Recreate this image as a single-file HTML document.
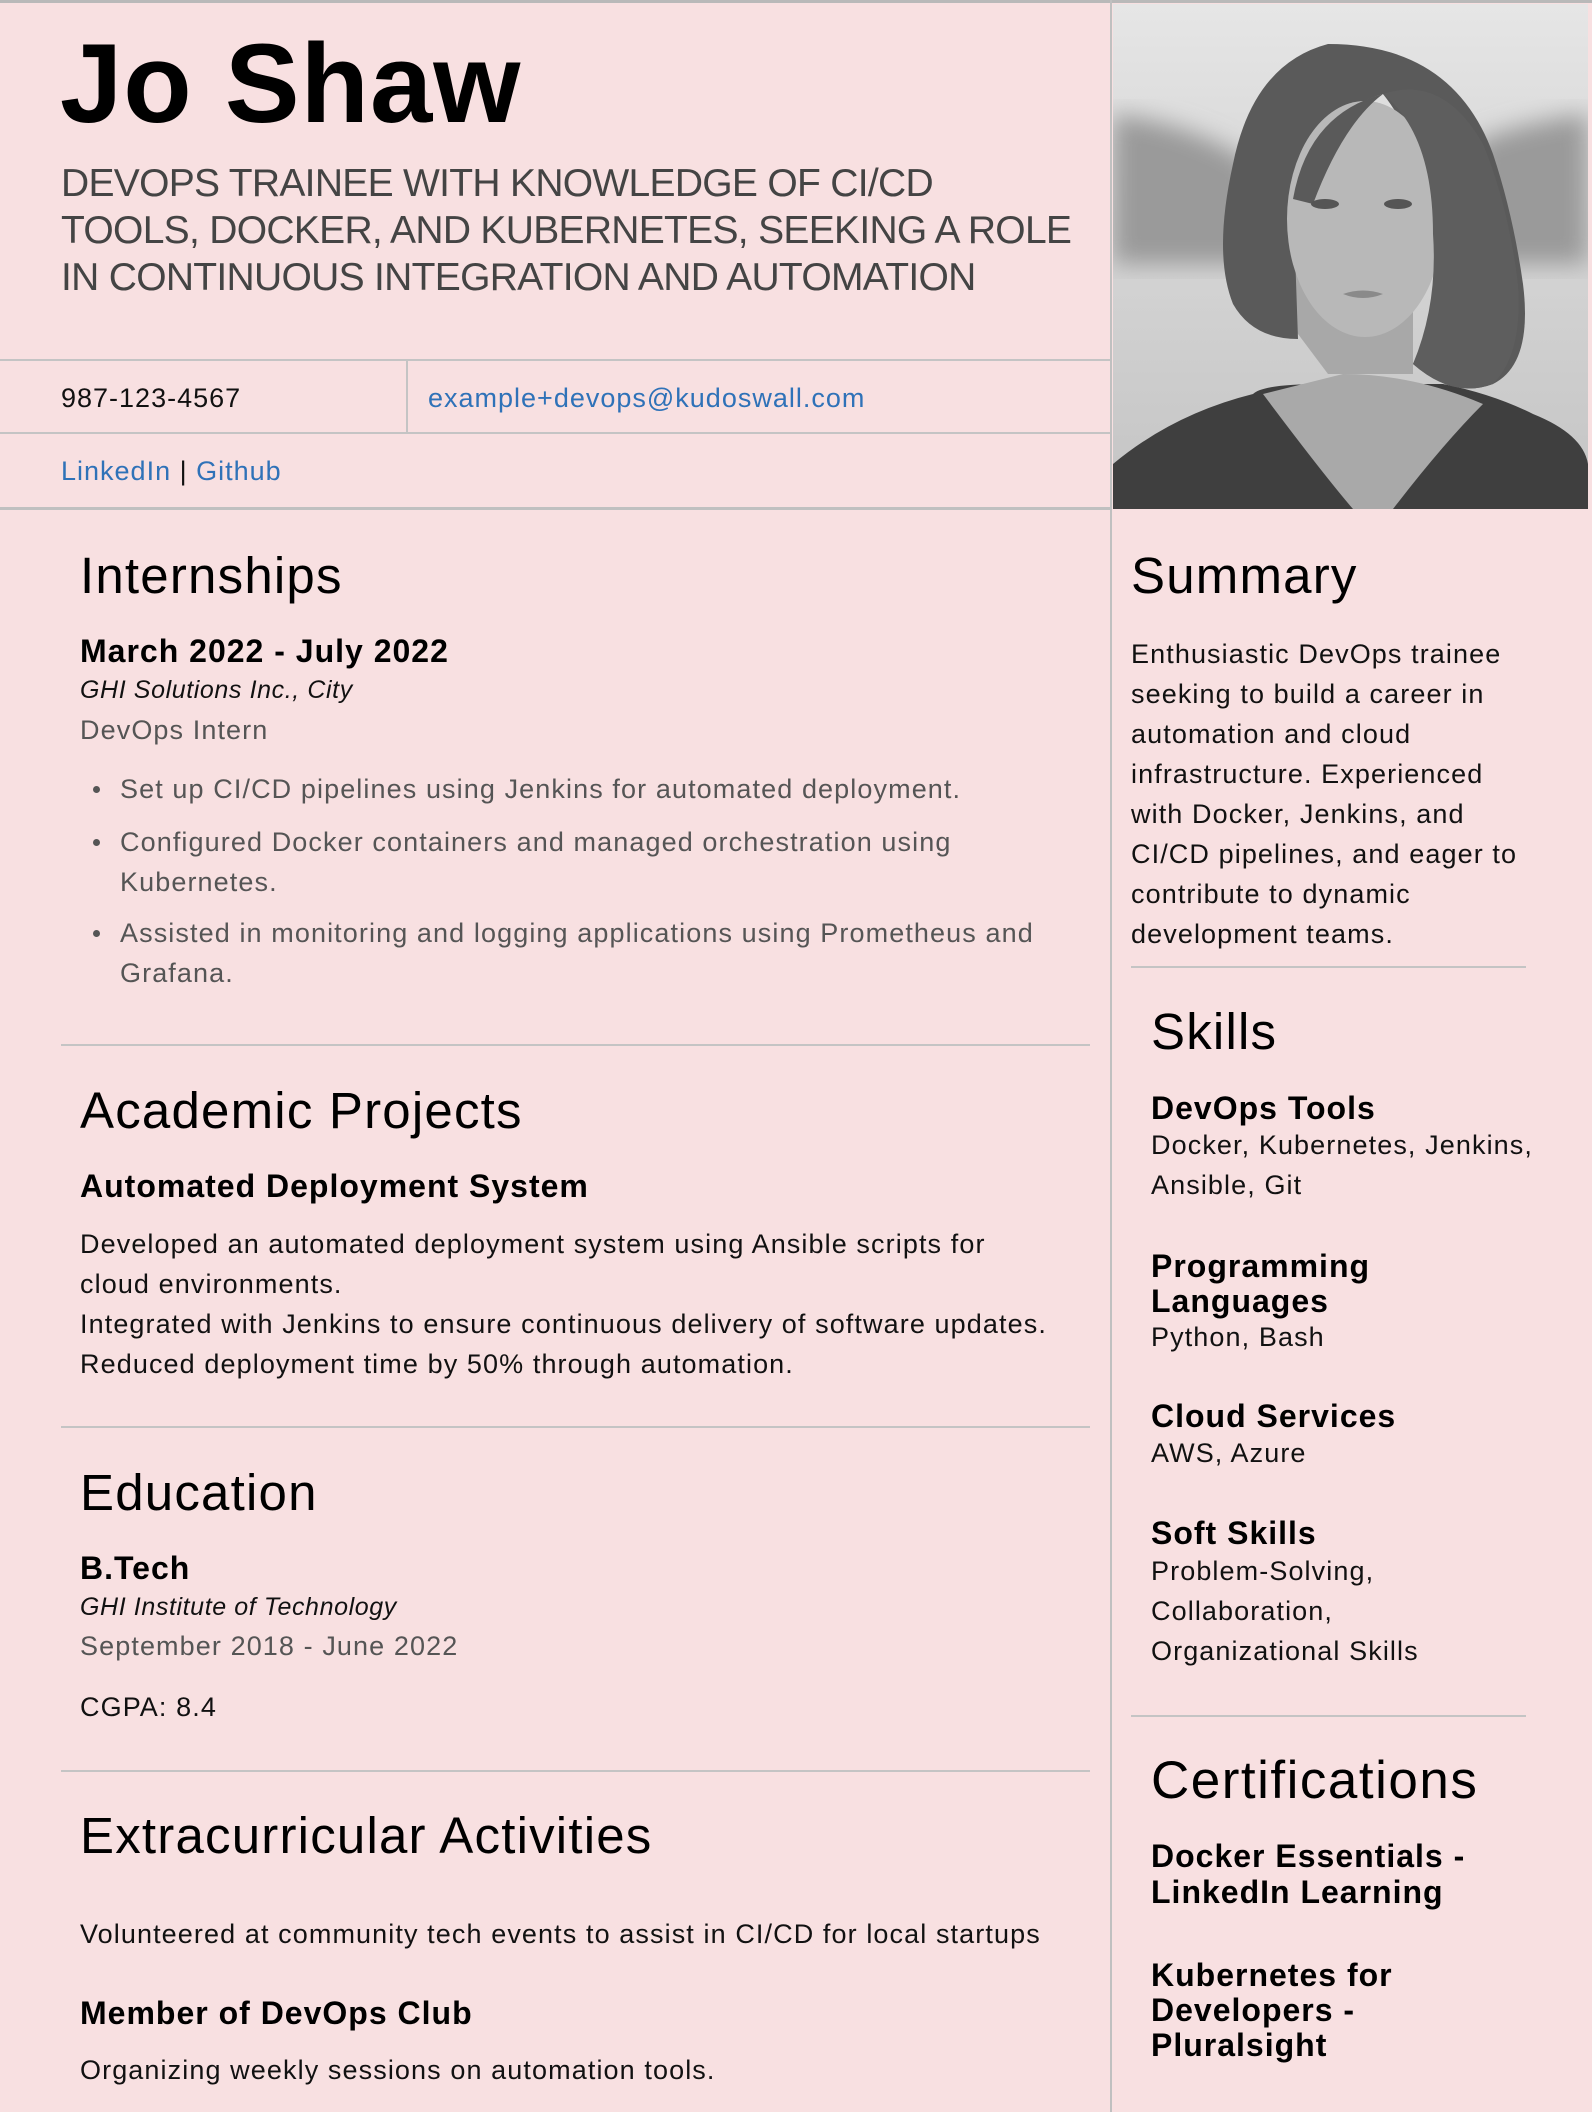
<!DOCTYPE html>
<html><head><meta charset="utf-8"><style>
*{margin:0;padding:0;box-sizing:border-box}
body{width:1592px;height:2112px;background:#f8e0e1;font-family:"Liberation Sans",sans-serif;color:#111;position:relative;overflow:hidden}
.a{position:absolute;white-space:nowrap}
.h{font-size:51px;line-height:60px;color:#000;letter-spacing:1.2px}
.sb{font-size:32px;line-height:40px;font-weight:bold;color:#000;letter-spacing:1px}
.it{font-size:25px;line-height:34px;font-style:italic;color:#111;letter-spacing:0.6px}
.g{font-size:27px;line-height:40px;color:#555;letter-spacing:1.1px}
.t{font-size:27px;line-height:40px;color:#111;letter-spacing:1.1px}
.hr{position:absolute;height:2px;background:#c4c4c4}
a{color:#2f72b8;text-decoration:none}
.li{position:absolute;white-space:nowrap;padding-left:27px}
.li:before{content:"";position:absolute;left:0;top:17px;width:7px;height:7px;border-radius:50%;background:#555}
</style></head><body>
<div style="position:absolute;left:0;top:0;width:1592px;height:3px;background:#b9b9b9"></div>
<div class="a" style="left:60px;top:28px;font-size:112px;line-height:112px;font-weight:bold;color:#000;letter-spacing:1px">Jo Shaw</div>
<div class="a" style="left:61px;top:160px;font-size:39px;line-height:47px;color:#444;letter-spacing:-0.7px">DEVOPS TRAINEE WITH KNOWLEDGE OF CI/CD<br>TOOLS, DOCKER, AND KUBERNETES, SEEKING A ROLE<br>IN CONTINUOUS INTEGRATION AND AUTOMATION</div>
<div class="hr" style="left:0;top:359px;width:1111px"></div>
<div class="hr" style="left:0;top:432px;width:1111px"></div>
<div style="position:absolute;left:406px;top:360px;width:2px;height:73px;background:#c4c4c4"></div>
<div class="a" style="left:61px;top:381px;font-size:27px;line-height:34px;letter-spacing:1px">987-123-4567</div>
<div class="a" style="left:428px;top:381px;font-size:27px;line-height:34px;letter-spacing:1px"><a>example+devops@kudoswall.com</a></div>
<div class="a" style="left:61px;top:454px;font-size:27px;line-height:34px;letter-spacing:1px"><a>LinkedIn</a> | <a>Github</a></div>
<div style="position:absolute;left:0;top:507px;width:1111px;height:3px;background:#c0c0c0"></div>
<div style="position:absolute;left:1110px;top:0;width:2px;height:2112px;background:#c0c0c0"></div>
<svg style="position:absolute;left:1113px;top:4px" width="475" height="505" viewBox="0 0 475 505">
<defs><linearGradient id="bg" x1="0" y1="0" x2="0" y2="1"><stop offset="0" stop-color="#e6e6e6"/><stop offset=".25" stop-color="#dcdcdc"/><stop offset="1" stop-color="#c4c4c4"/></linearGradient>
<filter id="bl"><feGaussianBlur stdDeviation="12"/></filter></defs>
<rect width="475" height="505" fill="url(#bg)"/>
<path d="M0 110 Q80 120 140 160 L140 260 L0 260Z" fill="#9a9a9a" filter="url(#bl)"/>
<path d="M475 110 Q400 120 360 140 L360 260 L475 260Z" fill="#9a9a9a" filter="url(#bl)"/>
<path d="M140 390 Q150 380 210 380 L330 380 Q380 390 420 410 Q470 430 475 460 L475 505 L0 505 L0 460 Q60 410 140 390Z" fill="#3f3f3f"/>
<path d="M150 390 Q210 470 240 505 L280 505 Q330 440 370 400 Q300 370 230 370 Z" fill="#a9a9a9"/>
<path d="M170 240 Q150 290 185 330 L215 370 L300 370 L300 300Z" fill="#a8a8a8"/>
<path d="M215 40 Q140 60 120 160 Q100 250 120 300 Q140 335 185 335 L180 190 Q200 110 270 90 Q310 140 320 230 Q330 300 300 360 Q340 395 380 380 Q420 360 410 280 Q400 210 380 150 Q340 40 215 40Z" fill="#5a5a5a"/>
<ellipse cx="252" cy="215" rx="78" ry="118" fill="#b8b8b8"/>
<path d="M270 90 Q320 130 320 230 Q325 300 300 360 Q340 395 380 380 Q410 350 405 280 Q395 200 370 140 Q330 70 270 90Z" fill="#5e5e5e"/>
<path d="M180 195 Q195 110 270 90 Q230 120 200 200Z" fill="#5a5a5a"/>
<ellipse cx="212" cy="200" rx="14" ry="5" fill="#555"/><ellipse cx="285" cy="200" rx="14" ry="5" fill="#555"/>
<path d="M230 290 Q250 283 270 290 Q250 298 230 290Z" fill="#8a8a8a"/>
</svg>
<!-- left column -->
<div class="a h" style="left:80px;top:546px">Internships</div>
<div class="a sb" style="left:80px;top:631px">March 2022 - July 2022</div>
<div class="a it" style="left:80px;top:673px">GHI Solutions Inc., City</div>
<div class="a g" style="left:80px;top:710px">DevOps Intern</div>
<div class="li g" style="left:93px;top:769px">Set up CI/CD pipelines using Jenkins for automated deployment.</div>
<div class="li g" style="left:93px;top:822px">Configured Docker containers and managed orchestration using<br>Kubernetes.</div>
<div class="li g" style="left:93px;top:913px">Assisted in monitoring and logging applications using Prometheus and<br>Grafana.</div>
<div class="hr" style="left:61px;top:1044px;width:1029px"></div>
<div class="a h" style="left:80px;top:1081px">Academic Projects</div>
<div class="a sb" style="left:80px;top:1166px">Automated Deployment System</div>
<div class="a t" style="left:80px;top:1224px">Developed an automated deployment system using Ansible scripts for<br>cloud environments.<br>Integrated with Jenkins to ensure continuous delivery of software updates.<br>Reduced deployment time by 50% through automation.</div>
<div class="hr" style="left:61px;top:1426px;width:1029px"></div>
<div class="a h" style="left:80px;top:1463px">Education</div>
<div class="a sb" style="left:80px;top:1548px">B.Tech</div>
<div class="a it" style="left:80px;top:1590px">GHI Institute of Technology</div>
<div class="a g" style="left:80px;top:1626px">September 2018 - June 2022</div>
<div class="a t" style="left:80px;top:1687px">CGPA: 8.4</div>
<div class="hr" style="left:61px;top:1770px;width:1029px"></div>
<div class="a h" style="left:80px;top:1806px">Extracurricular Activities</div>
<div class="a t" style="left:80px;top:1914px">Volunteered at community tech events to assist in CI/CD for local startups</div>
<div class="a sb" style="left:80px;top:1993px">Member of DevOps Club</div>
<div class="a t" style="left:80px;top:2050px">Organizing weekly sessions on automation tools.</div>
<!-- right column -->
<div class="a h" style="left:1131px;top:546px">Summary</div>
<div class="a t" style="left:1131px;top:634px">Enthusiastic DevOps trainee<br>seeking to build a career in<br>automation and cloud<br>infrastructure. Experienced<br>with Docker, Jenkins, and<br>CI/CD pipelines, and eager to<br>contribute to dynamic<br>development teams.</div>
<div class="hr" style="left:1131px;top:966px;width:395px"></div>
<div class="a h" style="left:1151px;top:1002px">Skills</div>
<div class="a sb" style="left:1151px;top:1090px;line-height:36px">DevOps Tools</div>
<div class="a t" style="left:1151px;top:1125px">Docker, Kubernetes, Jenkins,<br>Ansible, Git</div>
<div class="a sb" style="left:1151px;top:1249px;line-height:35px">Programming<br>Languages</div>
<div class="a t" style="left:1151px;top:1317px">Python, Bash</div>
<div class="a sb" style="left:1151px;top:1398px;line-height:36px">Cloud Services</div>
<div class="a t" style="left:1151px;top:1433px">AWS, Azure</div>
<div class="a sb" style="left:1151px;top:1515px;line-height:36px">Soft Skills</div>
<div class="a t" style="left:1151px;top:1551px">Problem-Solving,<br>Collaboration,<br>Organizational Skills</div>
<div class="hr" style="left:1131px;top:1715px;width:395px"></div>
<div class="a" style="left:1151px;top:1749px;font-size:53px;line-height:64px;color:#000;letter-spacing:1.5px">Certifications</div>
<div class="a sb" style="left:1151px;top:1838px;line-height:36px">Docker Essentials -<br>LinkedIn Learning</div>
<div class="a sb" style="left:1151px;top:1958px;line-height:35px">Kubernetes for<br>Developers -<br>Pluralsight</div>
</body></html>
